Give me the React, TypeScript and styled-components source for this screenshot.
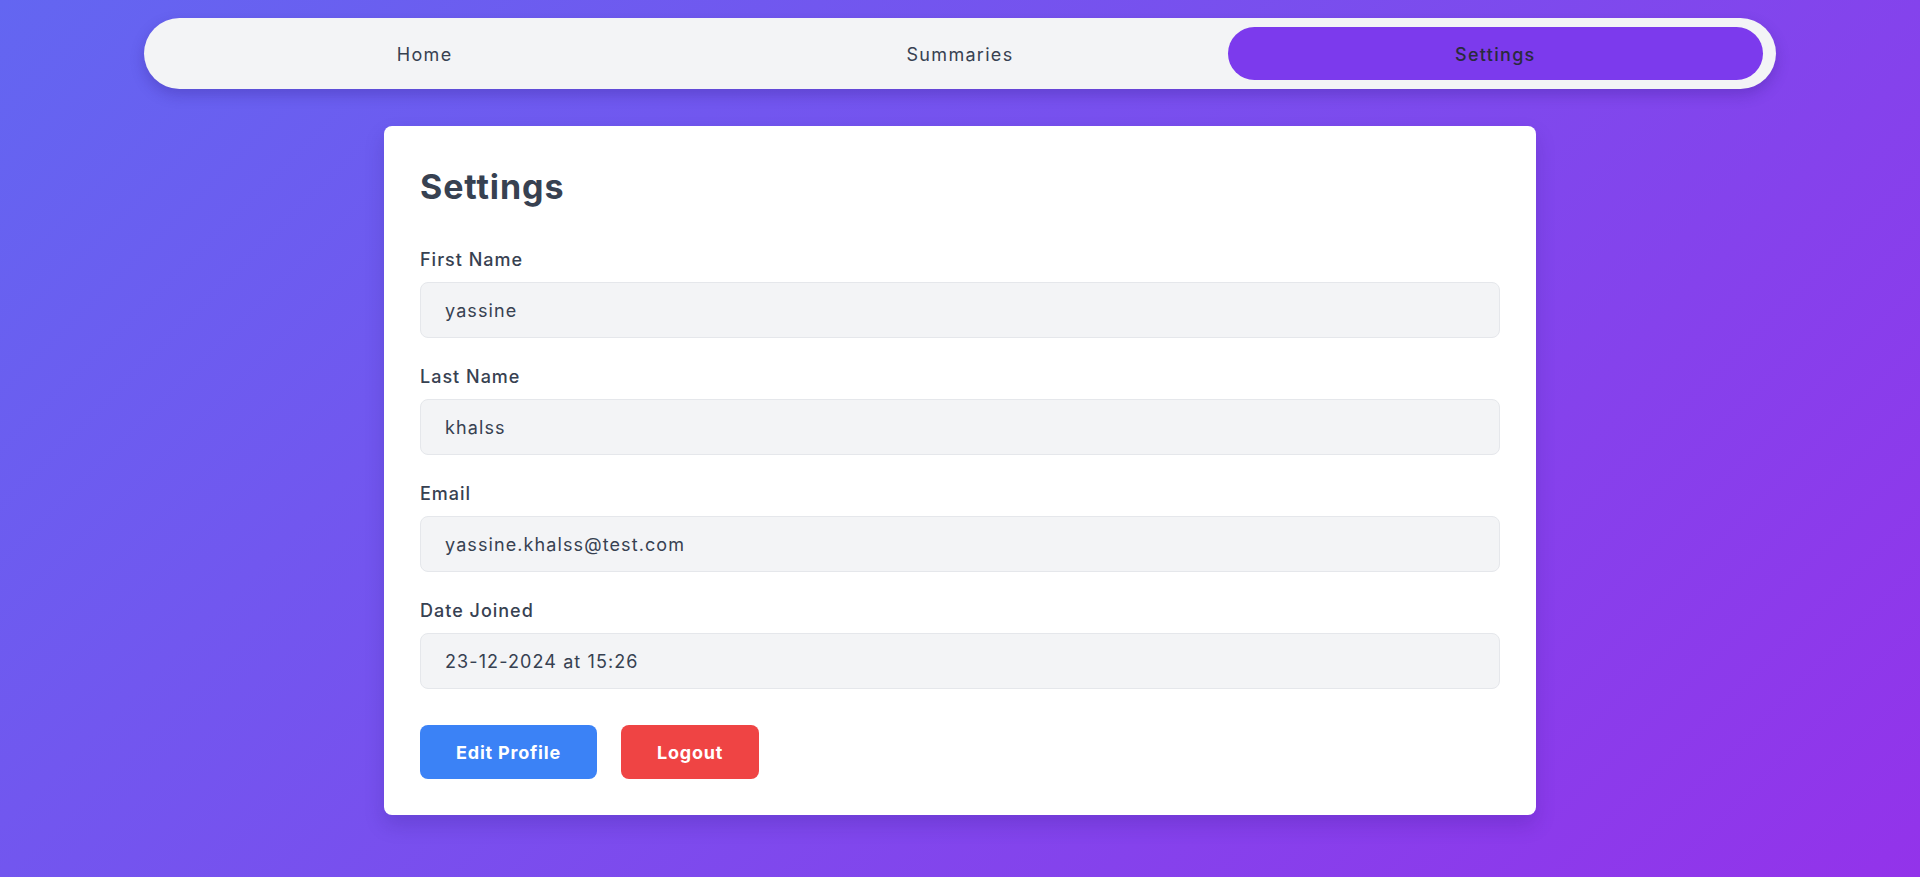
import React from "react";
import styled, { createGlobalStyle } from "styled-components";

const Global = createGlobalStyle`
  html, body { margin: 0; padding: 0; }
  body {
    font-family: Inter, "Noto Sans", Arial, sans-serif;
    background: linear-gradient(135deg, #6366f1 0%, #9333ea 100%);
    min-height: 877px;
  }
  * { box-sizing: border-box; }
`;

const Page = styled.div`
  min-height: 877px;
  padding-top: 18px;
  display: flex;
  flex-direction: column;
  align-items: center;
`;

const Nav = styled.nav`
  width: 1632px;
  height: 71px;
  padding: 9px 13px;
  background: #f3f4f6;
  border-radius: 9999px;
  box-shadow: 0 6px 14px rgba(40, 20, 120, 0.25);
  display: grid;
  grid-template-columns: repeat(3, 1fr);
`;

const Tab = styled.a<{ $active?: boolean }>`
  display: flex;
  align-items: center;
  justify-content: center;
  padding-top: 1px;
  border-radius: 9999px;
  font-size: 18px;
  letter-spacing: 1.3px;
  color: ${(p) => (p.$active ? "#2a2b3d" : "#374151")};
  font-weight: ${(p) => (p.$active ? 500 : 400)};
  background: ${(p) => (p.$active ? "#7c3aed" : "transparent")};
  text-decoration: none;
  cursor: pointer;
`;

const Card = styled.section`
  margin-top: 37px;
  width: 1152px;
  background: #ffffff;
  border-radius: 8px;
  padding: 36px;
  box-shadow: 0 10px 20px rgba(40, 20, 120, 0.2);
`;

const Title = styled.h1`
  margin: 5px 0 39px;
  font-size: 34px;
  line-height: 40px;
  font-weight: 700;
  letter-spacing: 0.9px;
  color: #374151;
`;

const Field = styled.div<{ $last?: boolean }>`
  margin-bottom: ${(p) => (p.$last ? "0" : "25px")};
`;

const Label = styled.label`
  display: block;
  font-size: 18px;
  line-height: 28px;
  font-weight: 500;
  letter-spacing: 1px;
  color: #374151;
  margin-bottom: 8px;
`;

const Value = styled.div`
  height: 56px;
  background: #f3f4f6;
  border: 1px solid #e5e7eb;
  border-radius: 8px;
  padding: 0 24px;
  display: flex;
  align-items: center;
  font-size: 18px;
  letter-spacing: 1.1px;
  color: #374151;
`;

const Actions = styled.div`
  display: flex;
  gap: 24px;
  margin-top: 36px;
`;

const Button = styled.button<{ $tone: "blue" | "red" }>`
  height: 54px;
  padding: 0 36px;
  border: none;
  border-radius: 8px;
  background: ${(p) => (p.$tone === "blue" ? "#3b82f6" : "#ef4444")};
  color: #ffffff;
  font-family: inherit;
  font-size: 18px;
  font-weight: 700;
  letter-spacing: 0.8px;
  cursor: pointer;
`;

const fields = [
  { label: "First Name", value: "yassine" },
  { label: "Last Name", value: "khalss" },
  { label: "Email", value: "yassine.khalss@test.com" },
  { label: "Date Joined", value: "23-12-2024 at 15:26" },
];

export default function App() {
  return (
    <>
      <Global />
      <Page>
        <Nav>
          <Tab>Home</Tab>
          <Tab>Summaries</Tab>
          <Tab $active>Settings</Tab>
        </Nav>
        <Card>
          <Title>Settings</Title>
          {fields.map((f, i) => (
            <Field key={f.label} $last={i === fields.length - 1}>
              <Label>{f.label}</Label>
              <Value>{f.value}</Value>
            </Field>
          ))}
          <Actions>
            <Button $tone="blue">Edit Profile</Button>
            <Button $tone="red">Logout</Button>
          </Actions>
        </Card>
      </Page>
    </>
  );
}
